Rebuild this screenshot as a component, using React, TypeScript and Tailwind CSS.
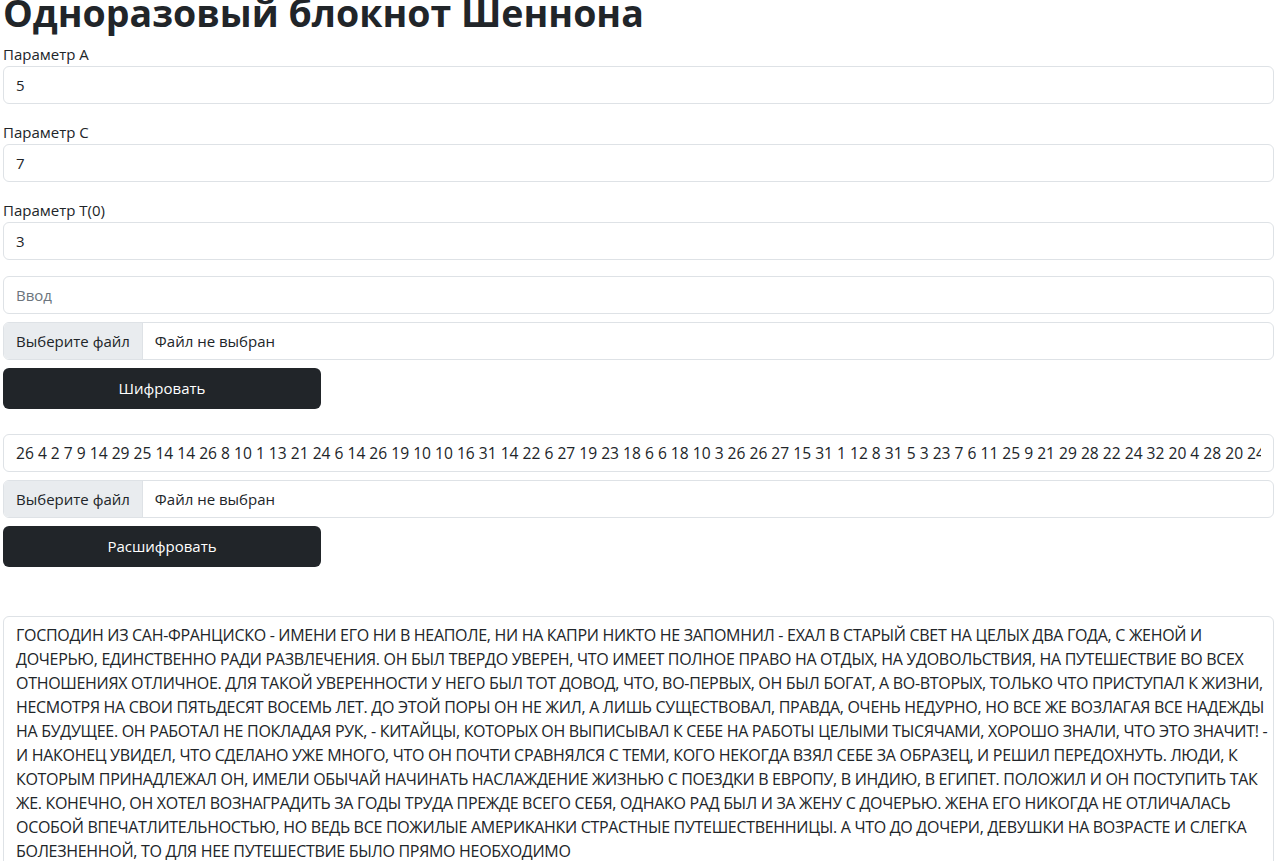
import React from "react";

const font = { fontFamily: '"Open Sans", "Noto Sans", sans-serif' };

const cipher =
  "26 4 2 7 9 14 29 25 14 14 26 8 10 1 13 21 24 6 14 26 19 10 10 16 31 14 22 6 27 19 23 18 6 6 18 10 3 26 26 27 15 31 1 12 8 31 5 3 23 7 6 11 25 9 21 29 28 22 24 32 20 4 28 20 24 31 9 12 5 17 22 8 14 30 2 11";

const text = [
  "ГОСПОДИН ИЗ САН-ФРАНЦИСКО - ИМЕНИ ЕГО НИ В НЕАПОЛЕ, НИ НА КАПРИ НИКТО НЕ ЗАПОМНИЛ - ЕХАЛ В СТАРЫЙ СВЕТ НА ЦЕЛЫХ ДВА ГОДА, С ЖЕНОЙ И",
  "ДОЧЕРЬЮ, ЕДИНСТВЕННО РАДИ РАЗВЛЕЧЕНИЯ. ОН БЫЛ ТВЕРДО УВЕРЕН, ЧТО ИМЕЕТ ПОЛНОЕ ПРАВО НА ОТДЫХ, НА УДОВОЛЬСТВИЯ, НА ПУТЕШЕСТВИЕ ВО ВСЕХ",
  "ОТНОШЕНИЯХ ОТЛИЧНОЕ. ДЛЯ ТАКОЙ УВЕРЕННОСТИ У НЕГО БЫЛ ТОТ ДОВОД, ЧТО, ВО-ПЕРВЫХ, ОН БЫЛ БОГАТ, А ВО-ВТОРЫХ, ТОЛЬКО ЧТО ПРИСТУПАЛ К ЖИЗНИ,",
  "НЕСМОТРЯ НА СВОИ ПЯТЬДЕСЯТ ВОСЕМЬ ЛЕТ. ДО ЭТОЙ ПОРЫ ОН НЕ ЖИЛ, А ЛИШЬ СУЩЕСТВОВАЛ, ПРАВДА, ОЧЕНЬ НЕДУРНО, НО ВСЕ ЖЕ ВОЗЛАГАЯ ВСЕ НАДЕЖДЫ",
  "НА БУДУЩЕЕ. ОН РАБОТАЛ НЕ ПОКЛАДАЯ РУК, - КИТАЙЦЫ, КОТОРЫХ ОН ВЫПИСЫВАЛ К СЕБЕ НА РАБОТЫ ЦЕЛЫМИ ТЫСЯЧАМИ, ХОРОШО ЗНАЛИ, ЧТО ЭТО ЗНАЧИТ! -",
  "И НАКОНЕЦ УВИДЕЛ, ЧТО СДЕЛАНО УЖЕ МНОГО, ЧТО ОН ПОЧТИ СРАВНЯЛСЯ С ТЕМИ, КОГО НЕКОГДА ВЗЯЛ СЕБЕ ЗА ОБРАЗЕЦ, И РЕШИЛ ПЕРЕДОХНУТЬ. ЛЮДИ, К",
  "КОТОРЫМ ПРИНАДЛЕЖАЛ ОН, ИМЕЛИ ОБЫЧАЙ НАЧИНАТЬ НАСЛАЖДЕНИЕ ЖИЗНЬЮ С ПОЕЗДКИ В ЕВРОПУ, В ИНДИЮ, В ЕГИПЕТ. ПОЛОЖИЛ И ОН ПОСТУПИТЬ ТАК",
  "ЖЕ. КОНЕЧНО, ОН ХОТЕЛ ВОЗНАГРАДИТЬ ЗА ГОДЫ ТРУДА ПРЕЖДЕ ВСЕГО СЕБЯ, ОДНАКО РАД БЫЛ И ЗА ЖЕНУ С ДОЧЕРЬЮ. ЖЕНА ЕГО НИКОГДА НЕ ОТЛИЧАЛАСЬ",
  "ОСОБОЙ ВПЕЧАТЛИТЕЛЬНОСТЬЮ, НО ВЕДЬ ВСЕ ПОЖИЛЫЕ АМЕРИКАНКИ СТРАСТНЫЕ ПУТЕШЕСТВЕННИЦЫ. А ЧТО ДО ДОЧЕРИ, ДЕВУШКИ НА ВОЗРАСТЕ И СЛЕГКА",
  "БОЛЕЗНЕННОЙ, ТО ДЛЯ НЕЕ ПУТЕШЕСТВИЕ БЫЛО ПРЯМО НЕОБХОДИМО",
].join("\n");

function Field({ label, value }: { label: string; value: string }) {
  return (
    <div className="mb-4">
      <label className="block leading-6">{label}</label>
      <input
        readOnly
        value={value}
        className="block h-[38px] w-full rounded-[6px] border border-[#dee2e6] bg-white px-3 leading-6 text-[#212529] outline-none"
      />
    </div>
  );
}

function FileInput() {
  return (
    <div className="mb-2 flex h-[38px] w-full overflow-hidden rounded-[6px] border border-[#dee2e6] bg-white">
      <div className="flex items-center border-r border-[#dee2e6] bg-[#e9ecef] px-3">Выберите файл</div>
      <div className="flex items-center px-3">Файл не выбран</div>
    </div>
  );
}

function DarkButton({ children }: { children: React.ReactNode }) {
  return (
    <button className="flex h-[41px] w-[318px] items-center justify-center rounded-[6px] bg-[#212529] text-white">
      {children}
    </button>
  );
}

export default function App() {
  return (
    <div className="h-[861px] overflow-hidden bg-white text-[15px] text-[#212529]" style={font}>
      <div className="pl-[3px] pr-[2px]">
        <h1 className="mt-[-11px] mb-[5px] text-[37.5px] font-bold leading-[48px]">Одноразовый блокнот Шеннона</h1>
        <Field label="Параметр A" value="5" />
        <Field label="Параметр C" value="7" />
        <Field label="Параметр T(0)" value="3" />
        <input
          placeholder="Ввод"
          className="mb-2 block h-[38px] w-full rounded-[6px] border border-[#dee2e6] bg-white px-3 outline-none placeholder:text-[#6c757d]"
        />
        <FileInput />
        <DarkButton>Шифровать</DarkButton>
        <input
          readOnly
          value={cipher}
          className="mt-[25px] mb-2 block h-[38px] w-full rounded-[6px] border border-[#dee2e6] bg-white px-3 text-[15.6px] outline-none"
        />
        <FileInput />
        <DarkButton>Расшифровать</DarkButton>
        <textarea
          readOnly
          wrap="off"
          value={text}
          className="mt-[49px] block h-[300px] w-full resize-none overflow-hidden whitespace-pre rounded-[6px] border border-[#dee2e6] bg-white px-3 py-[6px] text-[16px] leading-6 tracking-[-0.3px] outline-none"
        />
      </div>
    </div>
  );
}
